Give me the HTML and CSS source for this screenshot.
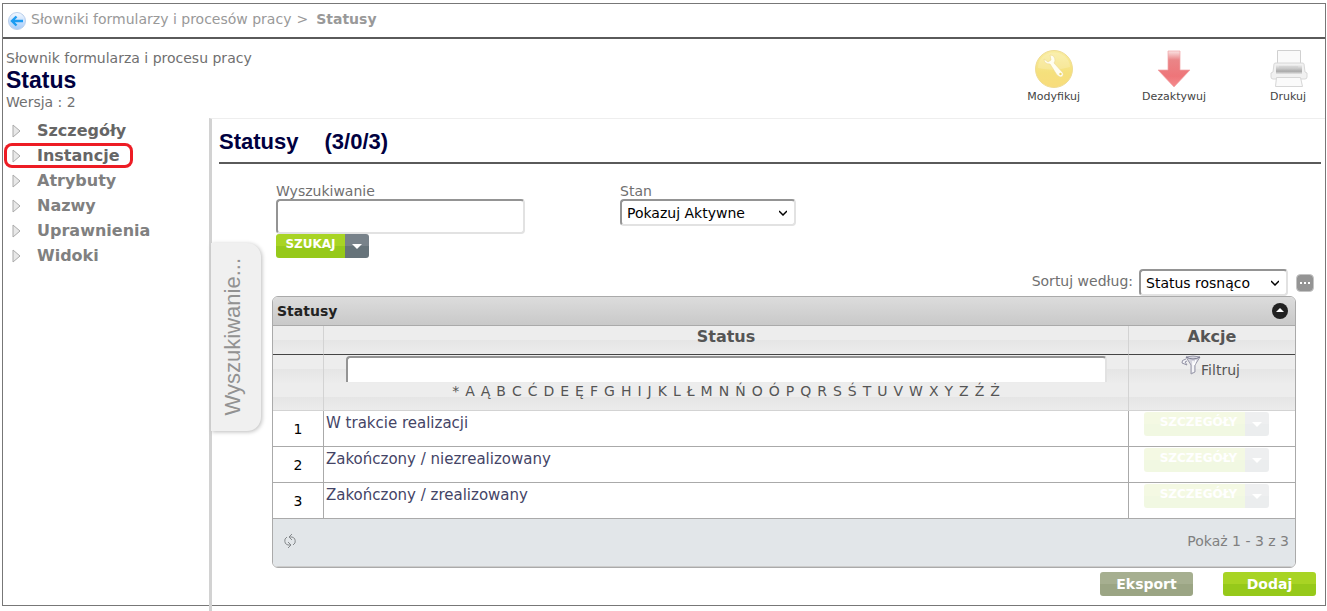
FILE: index.html
```html
<!DOCTYPE html>
<html lang="pl">
<head>
    <meta charset="UTF-8">
    <meta name="viewport" content="width=device-width, initial-scale=1.0">
    <title>Status</title>
    <link rel="stylesheet" href="styles.css">
</head>
<body>
    <div class="page">
        <nav class="breadcrumb">
            <a href="#" class="back" aria-label="Wstecz">
                <svg width="18" height="18" viewBox="0 0 18 18">
                    <defs>
                        <linearGradient id="backFill" x1="0" y1="0" x2="0" y2="1">
                            <stop offset="0" stop-color="#f4f9ff"/>
                            <stop offset="1" stop-color="#a3cbfb"/>
                        </linearGradient>
                    </defs>
                    <circle cx="9" cy="9" r="8.5" fill="url(#backFill)" stroke="#b9cfec"/>
                    <path d="M15 9H5M8.5 4.5L4 9l4.500 4.500" fill="none" stroke="#1c9cf2" stroke-width="2.4"/>
                </svg>
            </a>
            <a href="#">Słowniki formularzy i procesów pracy</a>
            <span class="separator">&gt;</span>
            <strong>Statusy</strong>
        </nav>

        <header class="header">
            <div class="object">
                <p>Słownik formularza i procesu pracy</p>
                <h1>Status</h1>
                <p>Wersja : 2</p>
            </div>
            <div class="tools">
                <button type="button" class="tool">
                    <svg width="40" height="40" viewBox="0 0 40 40">
                        <defs>
                            <linearGradient id="wrenchFill" x1="0" y1="0" x2="0" y2="1">
                                <stop offset="0" stop-color="#f9eda0"/>
                                <stop offset=".6" stop-color="#f5e07c"/>
                                <stop offset="1" stop-color="#f8dc7c"/>
                            </linearGradient>
                        </defs>
                        <circle cx="20" cy="20" r="18.5" fill="url(#wrenchFill)" stroke="#efdc94"/>
                        <path d="M4 19a16 15 0 0 1 32-1q-16 5-32 1z" fill="#fff" opacity=".18"/>
                        <path d="M10 10l4 3 3-2-1-5q5 0 5 6l-1 2 9 10q1 4-3 4l-3-2-7-11q-6 0-6-5z" fill="#fffef2" stroke="#ecd994" stroke-width=".6"/>
                        <circle cx="26.5" cy="25" r="1.2" fill="#efd668"/>
                    </svg>
                    Modyfikuj
                </button>
                <button type="button" class="tool">
                    <svg width="40" height="40" viewBox="0 0 40 40">
                        <defs>
                            <linearGradient id="arrowFill" x1="0" y1="0" x2="0" y2="1">
                                <stop offset="0" stop-color="#fae3e3"/>
                                <stop offset=".25" stop-color="#ea8587"/>
                                <stop offset=".7" stop-color="#ee7579"/>
                                <stop offset="1" stop-color="#f58b8e"/>
                            </linearGradient>
                        </defs>
                        <path d="M14 2h12v19h10L20 38 4 21h10z" fill="url(#arrowFill)" stroke="#f0a5a7" stroke-width=".7"/>
                    </svg>
                    Dezaktywuj
                </button>
                <button type="button" class="tool">
                    <svg width="40" height="40" viewBox="0 0 40 40">
                        <defs>
                            <linearGradient id="printerFill" x1="0" y1="0" x2="0" y2="1">
                                <stop offset="0" stop-color="#eee"/>
                                <stop offset=".7" stop-color="#aaa"/>
                                <stop offset="1" stop-color="#e4e4e4"/>
                            </linearGradient>
                        </defs>
                        <path d="M9.5 1.500h23v14h-23z" fill="#fafafa" stroke="#d0d0d0"/>
                        <path d="M6 15q0-1 2-1h26q2 0 2 1l1 8 2 1v4q0 2-2 2H5q-2 0-2-2v-4l2-1z" fill="#f1f1f1" stroke="#d8d8d8"/>
                        <path d="M8 16h26v9H8z" fill="url(#printerFill)"/>
                        <path d="M11 18h19" stroke="#ccc"/>
                        <path d="M8.500 28.500h24l2 9h-27z" fill="#fafafa" stroke="#d6d6d6"/>
                    </svg>
                    Drukuj
                </button>
            </div>
        </header>

        <div class="body">
            <nav class="sidebar">
                <ul>
                    <li class="active"><a href="#"><svg class="bullet" width="9" height="14" viewBox="0 0 9 14"><path d="M1 1v12l7-6z"/></svg>Szczegóły</a></li>
                    <li class="active marked"><a href="#"><svg class="bullet" width="9" height="14" viewBox="0 0 9 14"><path d="M1 1v12l7-6z"/></svg>Instancje</a></li>
                    <li><a href="#"><svg class="bullet" width="9" height="14" viewBox="0 0 9 14"><path d="M1 1v12l7-6z"/></svg>Atrybuty</a></li>
                    <li><a href="#"><svg class="bullet" width="9" height="14" viewBox="0 0 9 14"><path d="M1 1v12l7-6z"/></svg>Nazwy</a></li>
                    <li><a href="#"><svg class="bullet" width="9" height="14" viewBox="0 0 9 14"><path d="M1 1v12l7-6z"/></svg>Uprawnienia</a></li>
                    <li><a href="#"><svg class="bullet" width="9" height="14" viewBox="0 0 9 14"><path d="M1 1v12l7-6z"/></svg>Widoki</a></li>
                </ul>
            </nav>

            <main class="main">
                <button type="button" class="search-tab">Wyszukiwanie...</button>

                <h2><span>Statusy</span><span>(3/0/3)</span></h2>

                <form class="search">
                    <div class="field search-field">
                        <label for="query">Wyszukiwanie</label>
                        <input type="text" id="query" class="text-input">
                        <div class="split">
                            <button type="button" class="split-main">SZUKAJ</button>
                            <button type="button" class="split-arrow" aria-label="Więcej"></button>
                        </div>
                    </div>
                    <div class="field">
                        <label for="state">Stan</label>
                        <select id="state" class="state-select">
                            <option>Pokazuj Aktywne</option>
                        </select>
                    </div>
                </form>

                <div class="sort">
                    <label for="sort">Sortuj według:</label>
                    <select id="sort" class="sort-select">
                        <option>Status rosnąco</option>
                    </select>
                    <button type="button" class="more" aria-label="Opcje sortowania">
                        <svg width="18" height="18" viewBox="0 0 18 18">
                            <rect x=".5" y=".5" width="17" height="17" rx="4" fill="#949494" stroke="#c4c4c4"/>
                            <path d="M4 8h2v2H4zM8 8h2v2H8zM12 8h2v2h-2z" fill="#fff"/>
                        </svg>
                    </button>
                </div>

                <section class="grid">
                    <div class="grid-title">
                        <h3>Statusy</h3>
                        <button type="button" class="collapse" aria-label="Zwiń">
                            <svg width="16" height="16" viewBox="0 0 16 16">
                                <circle cx="8" cy="8" r="8" fill="#222"/>
                                <path d="M4 9l4-4 4 4z" fill="#fff"/>
                            </svg>
                        </button>
                    </div>
                    <table>
                        <colgroup>
                            <col class="col-number">
                            <col>
                            <col class="col-actions">
                        </colgroup>
                        <thead>
                            <tr class="names">
                                <th></th>
                                <th>Status</th>
                                <th>Akcje</th>
                            </tr>
                            <tr class="filters">
                                <td></td>
                                <td>
                                    <input type="text" class="filter-input" aria-label="Status">
                                    <div class="letters">
                                        <a href="#">*</a>
                                        <a href="#">A</a>
                                        <a href="#">Ą</a>
                                        <a href="#">B</a>
                                        <a href="#">C</a>
                                        <a href="#">Ć</a>
                                        <a href="#">D</a>
                                        <a href="#">E</a>
                                        <a href="#">Ę</a>
                                        <a href="#">F</a>
                                        <a href="#">G</a>
                                        <a href="#">H</a>
                                        <a href="#">I</a>
                                        <a href="#">J</a>
                                        <a href="#">K</a>
                                        <a href="#">L</a>
                                        <a href="#">Ł</a>
                                        <a href="#">M</a>
                                        <a href="#">N</a>
                                        <a href="#">Ń</a>
                                        <a href="#">O</a>
                                        <a href="#">Ó</a>
                                        <a href="#">P</a>
                                        <a href="#">Q</a>
                                        <a href="#">R</a>
                                        <a href="#">S</a>
                                        <a href="#">Ś</a>
                                        <a href="#">T</a>
                                        <a href="#">U</a>
                                        <a href="#">V</a>
                                        <a href="#">W</a>
                                        <a href="#">X</a>
                                        <a href="#">Y</a>
                                        <a href="#">Z</a>
                                        <a href="#">Ź</a>
                                        <a href="#">Ż</a>
                                    </div>
                                </td>
                                <td>
                                    <button type="button" class="filter-button">
                                        <svg width="20" height="20" viewBox="0 0 20 20">
                                            <path d="M5 2l5 8v9l4-2v-7l5-8q-7-2-14 0z" fill="#d4d4de" stroke="#9a9aaa"/>
                                            <path d="M5 2q7 4 14 0" fill="none" stroke="#77778c"/>
                                            <path d="M12 6v11M15 5l-2 5" stroke="#fff" stroke-width="1.5"/>
                                            <path d="M5 4Q0 5 1 8l5 2-2-3 2-1" fill="#f4f4f8" stroke="#9292a4"/>
                                        </svg>
                                        <span>Filtruj</span>
                                    </button>
                                </td>
                            </tr>
                        </thead>
                        <tbody>
                            <tr>
                                <td class="number">1</td>
                                <td>W trakcie realizacji</td>
                                <td class="actions">
                                    <div class="split faded">
                                        <button type="button" class="split-main">SZCZEGÓŁY</button>
                                        <button type="button" class="split-arrow" aria-label="Więcej"></button>
                                    </div>
                                </td>
                            </tr>
                            <tr>
                                <td class="number">2</td>
                                <td>Zakończony / niezrealizowany</td>
                                <td class="actions">
                                    <div class="split faded">
                                        <button type="button" class="split-main">SZCZEGÓŁY</button>
                                        <button type="button" class="split-arrow" aria-label="Więcej"></button>
                                    </div>
                                </td>
                            </tr>
                            <tr>
                                <td class="number">3</td>
                                <td>Zakończony / zrealizowany</td>
                                <td class="actions">
                                    <div class="split faded">
                                        <button type="button" class="split-main">SZCZEGÓŁY</button>
                                        <button type="button" class="split-arrow" aria-label="Więcej"></button>
                                    </div>
                                </td>
                            </tr>
                        </tbody>
                    </table>
                    <div class="grid-footer">
                        <button type="button" class="refresh" aria-label="Odśwież">
                            <svg width="14" height="16" viewBox="0 0 14 16" fill="none" stroke="#85898c">
                                <path d="M9 1L6 4l3 3M6 4h3q4 1 3 6l-2 2M5 15l3-3-3-3M8 12H5Q1 11 2 6l2-2"/>
                            </svg>
                        </button>
                        <span>Pokaż 1 - 3 z 3</span>
                    </div>
                </section>

                <div class="buttons">
                    <button type="button" class="button button-export">Eksport</button>
                    <button type="button" class="button button-add">Dodaj</button>
                </div>
            </main>
        </div>
    </div>
</body>
</html>
```
FILE: styles.css
```css
* {
    margin: 0;
    padding: 0;
    box-sizing: border-box;
}

body {
    padding: 3px 1px 5px 2px;
    background: #fff;
    color: #707070;
    font-family: Verdana, "DejaVu Sans", sans-serif;
    font-size: 14px;
    line-height: 18px;
}

a {
    color: inherit;
    text-decoration: none;
}

button {
    border: none;
    background: none;
    color: inherit;
    font: inherit;
    cursor: pointer;
}

svg {
    display: block;
}

h1,
h2 {
    color: #000040;
    font-family: Arial, "Liberation Sans", sans-serif;
    font-size: 22px;
}

.page {
    display: flex;
    flex-direction: column;
    min-height: calc(100vh - 8px);
    border: 1px solid #777;
}

.breadcrumb {
    display: flex;
    align-items: center;
    height: 35px;
    padding: 0 5px 3px;
    border-bottom: 2px solid #5a5a5a;
    color: #999;
}

.breadcrumb .back {
    margin: 4px 5px 0 0;
}

.separator {
    margin: 0 8px 0 5px;
}

.header {
    display: flex;
    justify-content: space-between;
    height: 79px;
    padding: 10px 17px 0 3px;
}

.object h1 {
    font-size: 23px;
    line-height: 26px;
}

.tools {
    display: flex;
    align-items: flex-start;
    gap: 62px;
}

.tool {
    display: flex;
    flex-direction: column;
    align-items: center;
    color: #444;
    font-size: 11px;
    line-height: 16px;
}

.body {
    display: flex;
    flex: 1;
}

.sidebar {
    flex: 0 0 206px;
}

.sidebar li {
    height: 25px;
    padding-left: 9px;
    color: #808080;
    font-size: 16px;
    font-weight: bold;
    line-height: 25px;
    list-style: none;
}

.sidebar .active {
    color: #666;
}

.sidebar .marked {
    width: 129px;
    margin-left: 1px;
    padding-left: 8px;
    border-radius: 8px;
    box-shadow: inset 0 0 0 3px #ed1c24;
}

.sidebar a {
    display: flex;
    align-items: center;
    gap: 16px;
}

.bullet path {
    fill: #e8e8e8;
    stroke: #aaa;
}

/* the divider runs past the bottom border of the page */
.main {
    position: relative;
    flex: 1;
    min-width: 0;
    margin-bottom: -6px;
    padding: 0 4px 15px 7px;
    border-top: 1px solid #eee;
    border-left: 3px solid #d2d2d2;
}

.main h2 {
    display: flex;
    gap: 26px;
    height: 45px;
    border-bottom: 2px solid #5a5a5a;
    line-height: 46px;
}

.search-tab {
    position: absolute;
    top: 124px;
    left: -1px;
    width: 50px;
    height: 188px;
    padding-right: 6px;
    border-radius: 0 14px 14px 0;
    background: #f0f0f0;
    box-shadow: 1px 1px 4px #bbb;
    color: #929292;
    font-family: Arial, "Liberation Sans", sans-serif;
    font-size: 22px;
    line-height: 44px;
    writing-mode: sideways-lr;
}

.search {
    display: flex;
    gap: 95px;
    padding: 18px 0 0 57px;
}

.field {
    display: flex;
    flex-direction: column;
    align-items: flex-start;
}

.field label {
    height: 17px;
}

.search input,
.filter-input,
select {
    border: 2px solid;
    border-color: #949494 #e2e2e2 #e2e2e2 #949494;
    border-radius: 4px;
    background: #fff;
}

.text-input {
    width: 249px;
    height: 35px;
}

select {
    height: 27px;
    padding: 0 5px;
    appearance: none;
    background: url("data:image/svg+xml,%3Csvg xmlns='http://www.w3.org/2000/svg' width='8' height='6'%3E%3Cpath d='M0 1l4 4 4-4' fill='none' stroke='%23000' stroke-width='1.500'/%3E%3C/svg%3E") no-repeat right 7px center;
    color: #000;
    font: 14px Verdana, "DejaVu Sans", sans-serif;
}

.state-select {
    width: 176px;
}

.sort-select {
    width: 149px;
    margin: 0 8px 0 6px;
}

.split {
    display: flex;
    width: 93px;
    height: 24px;
    border-radius: 3px;
    overflow: hidden;
}

.split-main {
    flex: 1;
    padding: 0 0 4px;
    background: linear-gradient(#a8d424 50%, #96c91a 50%);
    color: #fff;
    font-size: 12px;
    font-weight: bold;
}

.split-arrow {
    display: flex;
    align-items: center;
    justify-content: center;
    width: 24px;
    background: linear-gradient(#78828a 50%, #66737a 50%);
}

.split-arrow::after {
    content: "";
    border: 5px solid transparent;
    border-top-color: #fff;
    border-bottom: none;
}

.sort {
    display: flex;
    align-items: center;
    justify-content: flex-end;
    padding: 11px 7px 0 0;
}

.sort label {
    padding-bottom: 4px;
}

.grid {
    margin: 0 25px 0 53px;
    border: 1px solid #aaa;
    border-radius: 6px;
    overflow: hidden;
}

.grid-title {
    display: flex;
    align-items: center;
    justify-content: space-between;
    height: 29px;
    padding: 0 7px 0 4px;
    border-bottom: 1px solid #aaa;
    background: linear-gradient(#dcdcdc, #c9c9c9);
}

.grid-title h3 {
    color: #222;
    font-size: 14px;
}

table {
    width: 100%;
    border-collapse: separate;
    border-spacing: 0;
    table-layout: fixed;
}

.col-number {
    width: 51px;
}

.col-actions {
    width: 166px;
}

th,
.filters td {
    border-right: 1px solid #d3d3d3;
    background: linear-gradient(#ededed 50%, #e5e5e5 50%, #ececec);
    text-align: center;
}

th {
    height: 29px;
    padding-bottom: 6px;
    border-bottom: 1px solid #444;
    color: #555;
    font-size: 16px;
    line-height: 20px;
}

/* background tile repeats under the filter box */
.filters td {
    height: 56px;
    border-bottom: 1px solid #d3d3d3;
    background-size: 100% 28px;
    vertical-align: top;
}

.filter-input {
    display: block;
    width: calc(100% - 43px);
    height: 26px;
    margin: 1px auto 0;
    border-bottom: none;
    border-radius: 4px 4px 0 0;
}

.letters {
    display: flex;
    justify-content: center;
    gap: 6px;
    color: #555;
}

.filter-button {
    display: flex;
    align-items: flex-start;
    margin: 0 auto;
    padding-right: 3px;
    color: #555;
}

.filter-button span {
    padding-top: 6px;
}

tbody td {
    height: 36px;
    padding: 3px 2px;
    border-right: 1px solid #aaa;
    border-bottom: 1px solid #aaa;
    color: #444466;
    font-size: 15px;
    vertical-align: top;
}

th:last-child,
td:last-child {
    border-right: none;
}

tbody .number {
    color: #000;
    font-size: 14px;
    text-align: center;
    vertical-align: middle;
}

tbody .actions {
    padding: 1px 15px;
}

.faded {
    width: 125px;
    opacity: 0.12;
}

.faded .split-main {
    padding-left: 8px;
}

.grid-footer {
    display: flex;
    align-items: center;
    justify-content: space-between;
    height: 48px;
    padding: 0 6px 4px 10px;
    border-bottom: 1px solid #ccc;
    background: #e2e6e9;
    color: #808080;
}

.buttons {
    display: flex;
    justify-content: flex-end;
    gap: 30px;
    padding: 4px 5px 0 0;
}

.button {
    width: 93px;
    height: 24px;
    border-radius: 3px;
    color: #fff;
    font-weight: bold;
}

.button-export {
    background: linear-gradient(#a6af90 50%, #9ba584 50%);
}

.button-add {
    background: linear-gradient(#a8d424 50%, #96c91a 50%);
}
```
